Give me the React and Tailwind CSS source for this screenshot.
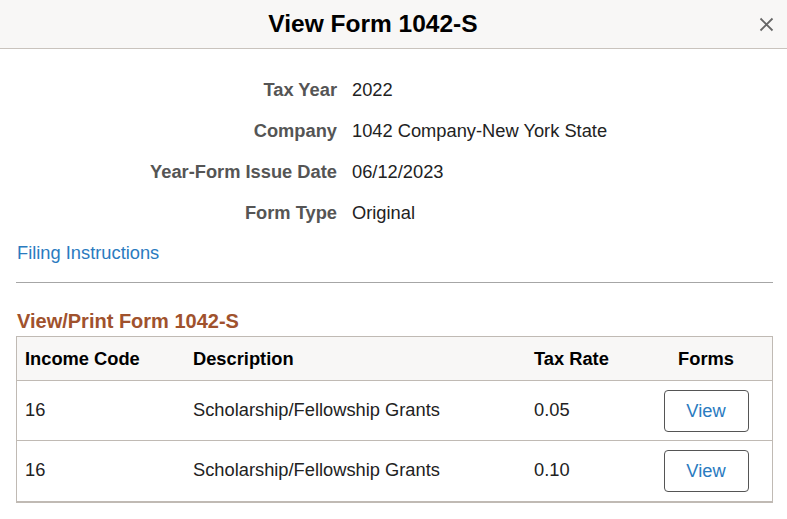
import React from "react";

const fields = [
  ["Tax Year", "2022"],
  ["Company", "1042 Company-New York State"],
  ["Year-Form Issue Date", "06/12/2023"],
  ["Form Type", "Original"],
];

const rows = [
  ["16", "Scholarship/Fellowship Grants", "0.05"],
  ["16", "Scholarship/Fellowship Grants", "0.10"],
];

export default function App() {
  return (
    <div
      className="w-[787px] h-[519px] bg-white overflow-hidden text-[#333]"
      style={{ fontFamily: '"Liberation Sans", Arial, sans-serif' }}
    >
      <div className="h-[49px] flex items-center bg-[#f8f7f6] border-b border-[#c9c3bd]">
        <div className="flex-1 text-center text-[24.5px] font-bold text-black leading-none">
          View Form 1042-S
        </div>
        <div className="w-[41px] h-full flex items-center justify-center">
          <svg width="15" height="15" viewBox="0 0 15 15">
            <path d="M1.5 1.5 L13.5 13.5 M13.5 1.5 L1.5 13.5" stroke="#666" strokeWidth="1.8" />
          </svg>
        </div>
      </div>

      <div className="pt-[20px] grid grid-cols-[337px_1fr] gap-x-[15px]">
        {fields.map(([label, value]) => (
          <React.Fragment key={label}>
            <div className="h-[41px] flex items-center justify-end text-[18.3px] font-bold text-[#555]">
              {label}
            </div>
            <div className="h-[41px] flex items-center text-[18.3px] text-[#222]">{value}</div>
          </React.Fragment>
        ))}
      </div>

      <div className="pl-[17px] pr-[15px]">
        <div className="mt-[9px] text-[18.3px] leading-[22px] text-[#2a7bbf]">Filing Instructions</div>
      </div>
      <div className="pl-[16px] pr-[14px]">
        <div className="mt-[18px] border-t border-[#a6a6a6]" />
        <div className="mt-[26px] pl-[1px] text-[20px] leading-[24px] font-bold text-[#a0522d]">
          View/Print Form 1042-S
        </div>
        <div className="mt-[3px] border border-b-2 border-[#c0bab4]">
          <div className="grid grid-cols-[168px_341px_114px_132px] h-[44px] items-center bg-[#f8f7f6] text-[18.3px] font-bold text-black border-b border-[#c0bab4]">
            <div className="pl-[8px]">Income Code</div>
            <div className="pl-[8px]">Description</div>
            <div className="pl-[8px]">Tax Rate</div>
            <div className="text-center">Forms</div>
          </div>
          {rows.map((r, i) => (
            <div
              key={i}
              className={
                "grid grid-cols-[168px_341px_114px_132px] h-[60px] items-center text-[18.3px] text-[#222] " +
                (i === 0 ? "border-b border-[#c0bab4]" : "")
              }
            >
              <div className="pl-[8px] -mt-[2px]">{r[0]}</div>
              <div className="pl-[8px] -mt-[2px]">{r[1]}</div>
              <div className="pl-[8px] -mt-[2px]">{r[2]}</div>
              <div className="flex justify-center">
                <button className="w-[85px] h-[42px] rounded-[4px] border border-[#555] bg-white text-[18.3px] text-[#2a7bbf]">
                  View
                </button>
              </div>
            </div>
          ))}
        </div>
      </div>
    </div>
  );
}
